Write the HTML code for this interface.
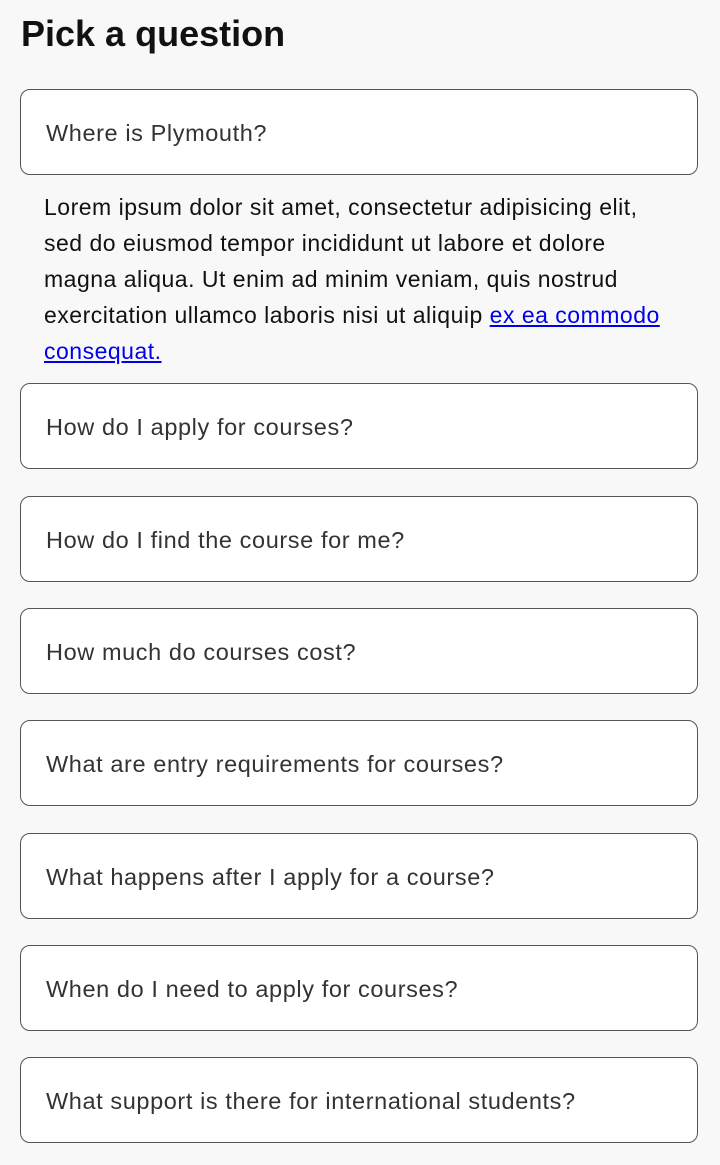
<!DOCTYPE html>
<html><head><meta charset="utf-8"><style>
html,body{margin:0;padding:0;background:#f8f8f8;width:720px;height:1165px;overflow:hidden;font-family:"Liberation Sans",Arial,sans-serif}
h1{position:absolute;left:21px;top:12px;margin:0;font-size:36px;font-weight:bold;color:#111;line-height:44px}
.q{position:absolute;left:20px;width:676px;height:84px;background:#fff;border:1.5px solid #555;border-radius:10px;box-sizing:content-box}
.q span{position:absolute;left:25px;top:0;line-height:86px;font-size:23.5px;letter-spacing:0.6px;color:#333;white-space:nowrap}
p{position:absolute;left:44px;top:189px;margin:0;width:630px;font-size:23px;letter-spacing:0.5px;line-height:36px;color:#111}
a{color:#0000ee}
</style></head><body>
<h1>Pick a question</h1>
<div class="q" style="top:89px"><span>Where is Plymouth?</span></div>
<p>Lorem ipsum dolor sit amet, consectetur adipisicing elit, sed do eiusmod tempor incididunt ut labore et dolore magna aliqua. Ut enim ad minim veniam, quis nostrud exercitation ullamco laboris nisi ut aliquip <a href="#">ex ea commodo consequat.</a></p>
<div class="q" style="top:383px"><span>How do I apply for courses?</span></div>
<div class="q" style="top:496px"><span>How do I find the course for me?</span></div>
<div class="q" style="top:608px"><span>How much do courses cost?</span></div>
<div class="q" style="top:720px"><span>What are entry requirements for courses?</span></div>
<div class="q" style="top:833px"><span>What happens after I apply for a course?</span></div>
<div class="q" style="top:945px"><span>When do I need to apply for courses?</span></div>
<div class="q" style="top:1057px"><span>What support is there for international students?</span></div>
</body></html>
